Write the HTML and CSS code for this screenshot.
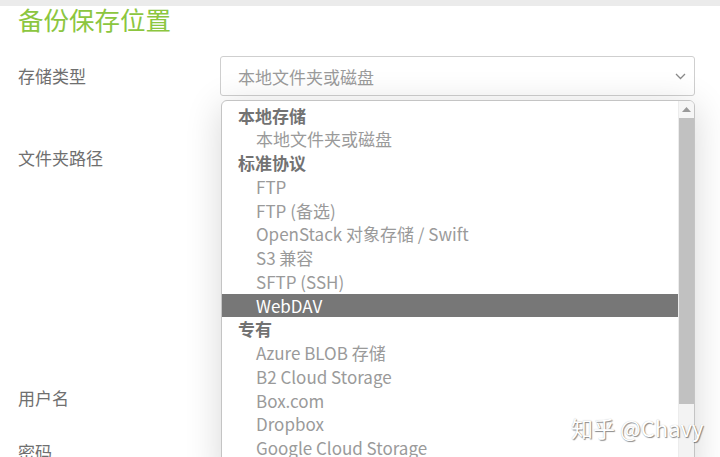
FILE: index.html
```html
<!DOCTYPE html>
<html lang="zh-CN">
<head>
<meta charset="utf-8">
<title>备份保存位置</title>
<link rel="stylesheet" href="styles.css">
</head>
<body>
<div class="topband"></div>
<main class="page">
  <h1 class="title">备份保存位置</h1>
  <div class="form">
    <div class="row row-type">
      <label class="label">存储类型</label>
      <div class="select">
        <span class="select-value">本地文件夹或磁盘</span>
        <svg class="chev" width="11" height="7" viewBox="0 0 11 7"><path d="M1 1 L5.5 5.5 L10 1" fill="none" stroke="#8a8a8a" stroke-width="1.3"/></svg>
      </div>
    </div>
    <div class="row row-path">
      <label class="label">文件夹路径</label>
      <div class="field tall"></div>
    </div>
    <div class="row">
      <label class="label">用户名</label>
      <div class="field"></div>
    </div>
    <div class="row">
      <label class="label">密码</label>
      <div class="field"></div>
    </div>
  </div>

  <div class="dropdown">
    <ul class="options">
      <li class="group">本地存储</li>
      <li class="opt">本地文件夹或磁盘</li>
      <li class="group">标准协议</li>
      <li class="opt">FTP</li>
      <li class="opt">FTP (备选)</li>
      <li class="opt">OpenStack 对象存储 / Swift</li>
      <li class="opt">S3 兼容</li>
      <li class="opt">SFTP (SSH)</li>
      <li class="opt active">WebDAV</li>
      <li class="group">专有</li>
      <li class="opt">Azure BLOB 存储</li>
      <li class="opt">B2 Cloud Storage</li>
      <li class="opt">Box.com</li>
      <li class="opt">Dropbox</li>
      <li class="opt">Google Cloud Storage</li>
    </ul>
    <div class="scrollbar">
      <div class="sb-btn"><svg width="9" height="5" viewBox="0 0 9 5"><path d="M0 5 L4.5 0 L9 5 Z" fill="#9a9a9a"/></svg></div>
      <div class="sb-thumb"></div>
      <div class="sb-track"></div>
    </div>
  </div>

  <div class="watermark">知乎 @Chavy</div>
</main>
</body>
</html>
```
FILE: styles.css
```css
html, body {
  margin: 0;
  padding: 0;
  background: #ffffff;
  overflow: hidden;
}
body {
  width: 720px;
  height: 457px;
  font-family: "Noto Sans CJK SC", "Noto Sans", sans-serif;
}
.topband {
  height: 6px;
  background: #ebebeb;
}
.page {
  position: relative;
  padding: 0 25px 0 18px;
}
.title {
  margin: 0;
  font-size: 25.5px;
  line-height: 26px;
  font-weight: 400;
  color: #8cc63f;
}
.form {
  display: flex;
  flex-direction: column;
  gap: 14px;
  margin-top: 24px;
}
.row {
  display: flex;
  align-items: center;
}
.label {
  width: 202px;
  flex: none;
  font-size: 17px;
  line-height: 24px;
  color: #6f6f6f;
}
.select {
  display: flex;
  align-items: center;
  justify-content: space-between;
  padding: 0 8px 0 17px;
  box-sizing: border-box;
  height: 40px;
  width: 475px;
  border: 1px solid #cfcfcf;
  border-radius: 3px;
}
.select-value {
  font-size: 17px;
  color: #9b9b9b;
}
.row-path {
  margin-top: 28px;
  align-items: flex-start;
}
.row-path .label {
  margin-top: 8px;
}
.field {
  width: 475px;
  height: 40px;
}
.field.tall {
  height: 226px;
}
.dropdown {
  position: absolute;
  left: 221px;
  top: 94px;
  width: 474px;
  height: 380px;
  box-sizing: border-box;
  border: 1px solid #c4c4c4;
  border-radius: 6px 6px 0 0;
  background: #fff;
  display: flex;
  overflow: hidden;
  box-shadow: 0 6px 36px rgba(0, 0, 0, 0.16);
}
.options {
  list-style: none;
  margin: 0;
  padding: 2.5px 0 0 0;
  flex: 1;
  font-size: 17px;
}
.options li {
  height: 23.75px;
  line-height: 23.75px;
  white-space: nowrap;
}
.group {
  padding-left: 16px;
  font-weight: 700;
  color: #727272;
}
.opt {
  padding-left: 34px;
  color: #9a9a9a;
}
.opt.active {
  background: #777777;
  color: #ffffff;
}
.scrollbar {
  width: 15px;
  flex: none;
  display: flex;
  flex-direction: column;
  border-left: 1px solid #ececec;
}
.sb-btn {
  height: 17px;
  background: #f6f6f6;
  display: flex;
  align-items: center;
  justify-content: center;
}
.sb-thumb {
  height: 286px;
  background: #c1c1c1;
}
.sb-track {
  flex: 1;
  background: #f3f3f3;
}
.watermark {
  position: absolute;
  left: 571px;
  top: 406px;
  font-size: 22px;
  line-height: 30px;
  color: #ffffff;
  font-family: "Noto Sans CJK SC", "Noto Sans", sans-serif;
  text-shadow: 1px 1px 1px rgba(0, 0, 0, 0.45), 0 0 1px rgba(0, 0, 0, 0.25);
  white-space: nowrap;
}
```
